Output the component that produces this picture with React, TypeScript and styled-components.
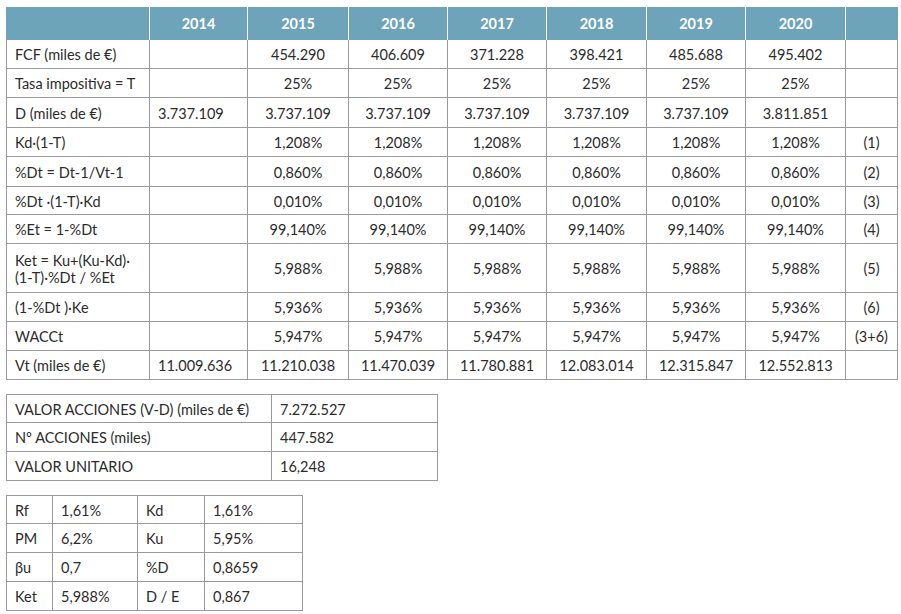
import React from 'react';
import styled, { createGlobalStyle } from 'styled-components';

const GlobalStyle = createGlobalStyle`
    body {
        margin: 0;
        padding: 7px 0 0 6px;
        background: #ffffff;
        font-family: Lato, "Open Sans", sans-serif;
        color: #2b2b2b;
    }
`;

const StyledPage = styled.div`
    display: flex;
    flex-flow: column nowrap;
    align-items: flex-start;
    gap: 14px;
`;

const StyledTable = styled.table`
    border-collapse: separate;
    border-spacing: 0;
    table-layout: fixed;
    font-size: 14.5px;
`;

const StyledHeadCell = styled.th`
    background: #6ea4b9;
    color: #ffffff;
    font-weight: 700;
    font-size: 14.5px;
    height: 33px;
    padding: 0;
    text-align: center;
    border-right: 1px solid #ffffff;
    box-sizing: border-box;
    &:last-child {
        border-right: none;
    }
`;

const StyledCell = styled.td<{ $align?: string; $h?: number; $first?: boolean; $top?: boolean }>`
    height: ${(p) => p.$h || 29}px;
    box-sizing: border-box;
    padding: 1px 8px 0 8px;
    text-align: ${(p) => p.$align || 'center'};
    line-height: 17px;
    white-space: nowrap;
    border-right: 1px solid #9a9a9a;
    border-bottom: 1px solid #9a9a9a;
    border-left: ${(p) => (p.$first ? '1px solid #9a9a9a' : 'none')};
    border-top: ${(p) => (p.$top ? '1px solid #9a9a9a' : 'none')};
    vertical-align: middle;
`;

const StyledNoteCell = styled(StyledCell)`
    padding: 1px 0 0 0;
`;

const years = ['2014', '2015', '2016', '2017', '2018', '2019', '2020'];
const mainWidths = [144, 98, 101, 99, 99, 100, 99, 100, 52];

type Row = { label: React.ReactNode; first?: string; values: string[]; note?: string; h: number };

const repeat = (v: string) => [v, v, v, v, v, v];

const rows: Row[] = [
    { label: 'FCF (miles de €)', values: ['454.290', '406.609', '371.228', '398.421', '485.688', '495.402'], h: 29 },
    { label: 'Tasa impositiva = T', values: repeat('25%'), h: 29 },
    { label: 'D (miles de €)', first: '3.737.109', values: ['3.737.109', '3.737.109', '3.737.109', '3.737.109', '3.737.109', '3.811.851'], h: 30 },
    { label: 'Kd·(1-T)', values: repeat('1,208%'), note: '(1)', h: 29 },
    { label: '%Dt = Dt-1/Vt-1', values: repeat('0,860%'), note: '(2)', h: 30 },
    { label: '%Dt ·(1-T)·Kd', values: repeat('0,010%'), note: '(3)', h: 28 },
    { label: '%Et = 1-%Dt', values: repeat('99,140%'), note: '(4)', h: 29 },
    { label: <>Ket = Ku+(Ku-Kd)·<br />(1-T)·%Dt / %Et</>, values: repeat('5,988%'), note: '(5)', h: 49 },
    { label: '(1-%Dt )·Ke', values: repeat('5,936%'), note: '(6)', h: 29 },
    { label: 'WACCt', values: repeat('5,947%'), note: '(3+6)', h: 29 },
    { label: 'Vt (miles de €)', first: '11.009.636', values: ['11.210.038', '11.470.039', '11.780.881', '12.083.014', '12.315.847', '12.552.813'], h: 29 },
];

const valuation = [
    ['VALOR ACCIONES (V-D) (miles de €)', '7.272.527'],
    ['Nº ACCIONES (miles)', '447.582'],
    ['VALOR UNITARIO', '16,248'],
];

const params = [
    ['Rf', '1,61%', 'Kd', '1,61%'],
    ['PM', '6,2%', 'Ku', '5,95%'],
    ['βu', '0,7', '%D', '0,8659'],
    ['Ket', '5,988%', 'D / E', '0,867'],
];

const Cols = ({ widths }: { widths: number[] }) => (
    <colgroup>
        {widths.map((w, i) => (
            <col key={i} style={{ width: w }} />
        ))}
    </colgroup>
);

export default function App() {
    return (
        <StyledPage>
            <GlobalStyle />
            <StyledTable style={{ width: 892 }}>
                <Cols widths={mainWidths} />
                <thead>
                    <tr>
                        <StyledHeadCell />
                        {years.map((y) => (
                            <StyledHeadCell key={y}>{y}</StyledHeadCell>
                        ))}
                        <StyledHeadCell />
                    </tr>
                </thead>
                <tbody>
                    {rows.map((r, i) => (
                        <tr key={i}>
                            <StyledCell $align="left" $first $h={r.h}>{r.label}</StyledCell>
                            <StyledCell $align="left" $h={r.h}>{r.first || ''}</StyledCell>
                            {r.values.map((v, j) => (
                                <StyledCell key={j} $h={r.h}>{v}</StyledCell>
                            ))}
                            <StyledNoteCell $h={r.h}>{r.note || ''}</StyledNoteCell>
                        </tr>
                    ))}
                </tbody>
            </StyledTable>

            <StyledTable style={{ width: 432 }}>
                <Cols widths={[266, 166]} />
                <tbody>
                    {valuation.map((r, i) => (
                        <tr key={i}>
                            <StyledCell $align="left" $first $top={i === 0}>{r[0]}</StyledCell>
                            <StyledCell $align="left" $top={i === 0}>{r[1]}</StyledCell>
                        </tr>
                    ))}
                </tbody>
            </StyledTable>

            <StyledTable style={{ width: 297 }}>
                <Cols widths={[47, 85, 67, 98]} />
                <tbody>
                    {params.map((r, i) => (
                        <tr key={i}>
                            {r.map((c, j) => (
                                <StyledCell key={j} $align="left" $first={j === 0} $top={i === 0}>{c}</StyledCell>
                            ))}
                        </tr>
                    ))}
                </tbody>
            </StyledTable>
        </StyledPage>
    );
}
